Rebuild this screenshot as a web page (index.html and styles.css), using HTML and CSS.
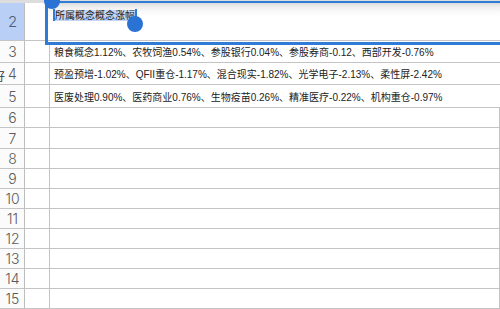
FILE: index.html
```html
<!DOCTYPE html>
<html>
<head>
<meta charset="utf-8">
<link rel="stylesheet" href="styles.css">
</head>
<body>
<div class="sheet">
  <div class="hdr"></div><div class="hdr"></div><div class="hdr"></div>

  <div class="rh sel r2">2</div><div class="c r2"></div><div class="c r2"></div>
  <div class="rh r3">3</div><div class="c r3"></div><div class="c txt r3">粮食概念1.12%、农牧饲渔0.54%、参股银行0.04%、参股券商-0.12、西部开发-0.76%</div>
  <div class="rh r4"><span class="cut">好</span>4</div><div class="c r4"></div><div class="c txt r4">预盈预增-1.02%、QFII重仓-1.17%、混合现实-1.82%、光学电子-2.13%、柔性屏-2.42%</div>
  <div class="rh r5">5</div><div class="c r5"></div><div class="c txt r5">医废处理0.90%、医药商业0.76%、生物疫苗0.26%、精准医疗-0.22%、机构重仓-0.97%</div>
  <div class="rh">6</div><div class="c"></div><div class="c"></div>
  <div class="rh r7">7</div><div class="c r7"></div><div class="c r7"></div>
  <div class="rh">8</div><div class="c"></div><div class="c"></div>
  <div class="rh">9</div><div class="c"></div><div class="c"></div>
  <div class="rh">10</div><div class="c"></div><div class="c"></div>
  <div class="rh">11</div><div class="c"></div><div class="c"></div>
  <div class="rh">12</div><div class="c"></div><div class="c"></div>
  <div class="rh">13</div><div class="c"></div><div class="c"></div>
  <div class="rh">14</div><div class="c"></div><div class="c"></div>
  <div class="rh">15</div><div class="c"></div><div class="c"></div>

  <div class="editor">
    <span class="caret caret-start"></span><span class="picked">所属概念概念涨幅</span><span class="caret caret-end"></span>
    <span class="handle handle-top"></span>
    <span class="handle handle-bottom"></span>
  </div>
</div>
</body>
</html>
```

FILE: styles.css
```css
html, body {
  margin: 0;
  padding: 0;
  background: #ffffff;
  overflow: hidden;
}

.sheet {
  position: relative;
  width: 500px;
  height: 309px;
  display: grid;
  grid-template-columns: 25px 25px 1fr;
  grid-template-rows: 3px 38px 22px 22px 23px 20px 21px 20px 20px 20px 20px 20px 20px 20px 20px;
  font-family: "Liberation Sans", "Noto Sans CJK SC", sans-serif;
}

.hdr {
  background: #dddddd;
}

.rh {
  position: relative;
  box-sizing: border-box;
  border-right: 1px solid #bdbdbd;
  border-bottom: 1px solid #c4c4c4;
  background: #fbfbfb;
  display: flex;
  align-items: center;
  justify-content: center;
  padding-left: 1px;
  font-family: "Inter", "Liberation Sans", sans-serif;
  font-weight: 300;
  font-size: 14px;
  color: #5a5a5a;
  overflow: hidden;
}

.rh.sel {
  background: #b9cff5;
  color: #4d5d7a;
  font-size: 15px;
}

.cut {
  position: absolute;
  left: -6px;
  top: 5px;
  font-family: "Noto Sans CJK SC", sans-serif;
  font-weight: 400;
  font-size: 11px;
  color: #333333;
}

.c {
  box-sizing: border-box;
  border-right: 1px solid #c4c4c4;
  border-bottom: 1px solid #c4c4c4;
  background: #ffffff;
}

.txt {
  display: flex;
  align-items: center;
  padding-left: 4px;
  font-size: 10px;
  color: #222222;
  white-space: nowrap;
  overflow: hidden;
  border-right: none;
}

.editor {
  position: absolute;
  left: 45px;
  top: 1px;
  width: 470px;
  height: 44px;
  box-sizing: border-box;
  border: 3px solid #2f7bd6;
  border-top-width: 2px;
  background: linear-gradient(#dadada, #efefef 4px, #fafafa 9px, #ffffff 14px);
  box-shadow: inset 0 -1px 0 #ffffff, inset 0 -2px 0 #c6c6c6;
  padding: 6px 0 0 7px;
  font-size: 10px;
  line-height: 11px;
  color: #222222;
  white-space: nowrap;
}

.picked {
  background: #c3d6f5;
}

.caret {
  display: inline-block;
  width: 2px;
  height: 12px;
  vertical-align: -2px;
  background: #2f7bd6;
}

.caret-start {
  margin-left: -2px;
}

.handle {
  position: absolute;
  width: 16px;
  height: 16px;
  border-radius: 50%;
  background: #2a73d4;
}

.handle-top {
  left: -4px;
  top: -10px;
}

.handle-bottom {
  left: 79px;
  top: 13px;
}
```
